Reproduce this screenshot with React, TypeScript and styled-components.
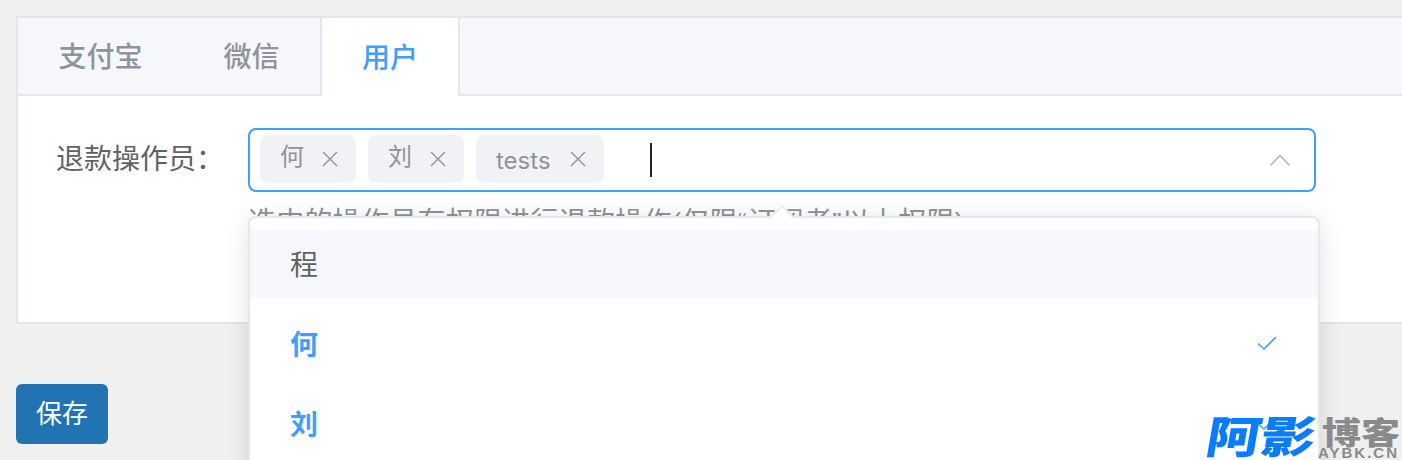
import React from "react";
import styled, { createGlobalStyle } from "styled-components";

const Global = createGlobalStyle`
  html, body { margin: 0; padding: 0; }
  body {
    width: 1402px; height: 460px; overflow: hidden; background: #f0f0f0;
    font-family: "Noto Sans CJK SC", "Liberation Sans", sans-serif;
  }
  * { box-sizing: border-box; }
`;

const Page = styled.div`
  position: relative; width: 1402px; height: 460px; overflow: hidden;
  padding: 16px;
`;
const Card = styled.div`
  width: 1500px; height: 308px; background: #fff; border: 2px solid #e2e5ec;
`;
const TabBar = styled.div`
  display: flex; height: 78px; background: #f5f7fa; border-bottom: 2px solid #e4e7ed;
`;
const Tab = styled.div<{ $active?: boolean; $w: number }>`
  width: ${p => p.$w}px; height: ${p => (p.$active ? 78 : 76)}px;
  display: flex; align-items: center; justify-content: center;
  font-size: 28px; font-weight: 500; line-height: 72px; padding-bottom: 3px;
  color: ${p => (p.$active ? "#409eff" : "#909399")};
  background: ${p => (p.$active ? "#fff" : "transparent")};
  ${p => p.$active && "border-left: 2px solid #e4e7ed; border-right: 2px solid #e4e7ed;"}
`;
const FormRow = styled.div`
  display: flex; padding: 32px 0 0 38px;
`;
const Label = styled.label`
  width: 192px; height: 64px; font-size: 28px; line-height: 58px; color: #606266; white-space: nowrap;
`;
const Field = styled.div`
  width: 1068px;
`;
const Select = styled.div`
  height: 64px; border: 2px solid #409eff; border-radius: 8px; background: #fff;
  display: flex; align-items: center; padding: 0 24px 2px 10px; gap: 12px;
`;
const Tag = styled.div<{ $w: number }>`
  width: ${p => p.$w}px; height: 48px; border-radius: 8px; background: #f0f2f5;
  display: flex; align-items: center; justify-content: space-between; padding: 0 18px 0 20px;
  color: #909399; font-family: Inter, "Noto Sans CJK SC", sans-serif; font-size: 24px;
`;
const TagText = styled.span<{ $latin?: boolean }>`
  display: block; height: 48px; line-height: ${p => (p.$latin ? 52 : 44)}px;
`;
const Close = styled.svg`
  width: 16px; height: 16px; flex: none;
`;
const Caret = styled.span`
  width: 2px; height: 34px; background: #1f2329; margin: 2px 0 0 34px;
`;
const Arrow = styled.svg`
  width: 20px; height: 14px; margin: 2px 0 0 auto;
`;
const Help = styled.div`
  margin-top: 13px; font-family: "Liberation Sans", "Noto Sans CJK SC", sans-serif;
  font-size: 28px; line-height: 36px; color: #909399; white-space: nowrap; letter-spacing: 0.25px;
`;
const SaveButton = styled.button`
  display: block; margin-top: 60px; width: 92px; height: 60px; border: 0; border-radius: 6px;
  background: #2273b1; color: #fff; font-size: 26px; line-height: 56px; font-family: inherit; padding: 0 0 4px;
`;
const Dropdown = styled.div`
  position: absolute; left: 248px; top: 216px; width: 1072px; height: 300px;
  background: #fff; border: 2px solid #e4e7ed; border-radius: 8px;
  box-shadow: 0 4px 24px rgba(0, 0, 0, 0.12); padding: 12px 0;
  display: flex; flex-direction: column; gap: 12px;
`;
const Pointer = styled.span`
  position: absolute; left: 524px; top: -10px; width: 16px; height: 16px;
  background: #fff; border-top: 2px solid #e9ecf1; border-left: 2px solid #e9ecf1;
  transform: rotate(45deg);
`;
const Option = styled.div<{ $hover?: boolean; $selected?: boolean }>`
  height: 68px; flex: none; display: flex; align-items: center; justify-content: space-between;
  padding: 0 40px 2px; font-size: 28px;
  font-weight: ${p => (p.$selected ? 700 : 400)};
  color: ${p => (p.$selected ? "#409eff" : "#606266")};
  background: ${p => (p.$hover ? "#f5f7fa" : "#fff")};
`;
const Check = styled.svg`
  width: 22px; height: 16px; flex: none;
`;
const Watermark = styled.div`
  position: absolute; left: 1207px; top: 414px; width: 195px; height: 46px; pointer-events: none;
  display: flex; align-items: flex-start;
`;
const MarkBlue = styled.span`
  display: block; width: 112px; height: 44px; flex: none;
  font-size: 44px; line-height: 40px; font-weight: 900; color: #0a7cff;
  white-space: nowrap; transform-origin: left center; transform: scaleX(1.24) skewX(-8deg);
`;
const MarkSide = styled.div`
  display: flex; flex-direction: column; flex: 1;
`;
const MarkGrey = styled.span`
  display: block; height: 33px; margin-left: 3px;
  font-size: 31px; line-height: 33px; font-weight: 900; color: #8a8a8a; white-space: nowrap;
  transform-origin: left center; transform: scaleX(1.26);
`;
const MarkUrl = styled.span`
  display: block; height: 12px; margin-left: -1px;
  font-family: "Liberation Sans", sans-serif; font-size: 15px; line-height: 12px; font-weight: 700;
  color: #8a8a8a; letter-spacing: 2px; white-space: nowrap;
`;

const X = () => (
  <Close viewBox="0 0 16 16"><path d="M1 1 L15 15 M15 1 L1 15" stroke="#909399" strokeWidth="1.4" fill="none" /></Close>
);
const Tick = () => (
  <Check viewBox="0 0 22 16"><path d="M2 8.5 L8 14 L20 2" stroke="#409eff" strokeWidth="1.6" fill="none" /></Check>
);

export default function App() {
  return (
    <Page>
      <Global />
      <Card>
        <TabBar>
          <Tab $w={165}>支付宝</Tab>
          <Tab $w={137}>微信</Tab>
          <Tab $w={140} $active>用户</Tab>
        </TabBar>
        <FormRow>
          <Label>退款操作员：</Label>
          <Field>
            <Select>
              <Tag $w={96}><TagText>何</TagText><X /></Tag>
              <Tag $w={96}><TagText>刘</TagText><X /></Tag>
              <Tag $w={128}><TagText $latin>tests</TagText><X /></Tag>
              <Caret />
              <Arrow viewBox="0 0 20 14"><path d="M0.5 12.5 L10 2.5 L19.5 12.5" stroke="#b4b6bc" strokeWidth="1.6" fill="none" /></Arrow>
            </Select>
            <Help>选中的操作员有权限进行退款操作(仅限“订阅者”以上权限)</Help>
          </Field>
        </FormRow>
      </Card>
      <SaveButton>保存</SaveButton>
      <Dropdown>
        <Pointer />
        <Option $hover>程</Option>
        <Option $selected>何<Tick /></Option>
        <Option $selected>刘<Tick /></Option>
      </Dropdown>
      <Watermark>
        <MarkBlue>阿影</MarkBlue>
        <MarkSide>
          <MarkGrey>博客</MarkGrey>
          <MarkUrl>AYBK.CN</MarkUrl>
        </MarkSide>
      </Watermark>
    </Page>
  );
}
